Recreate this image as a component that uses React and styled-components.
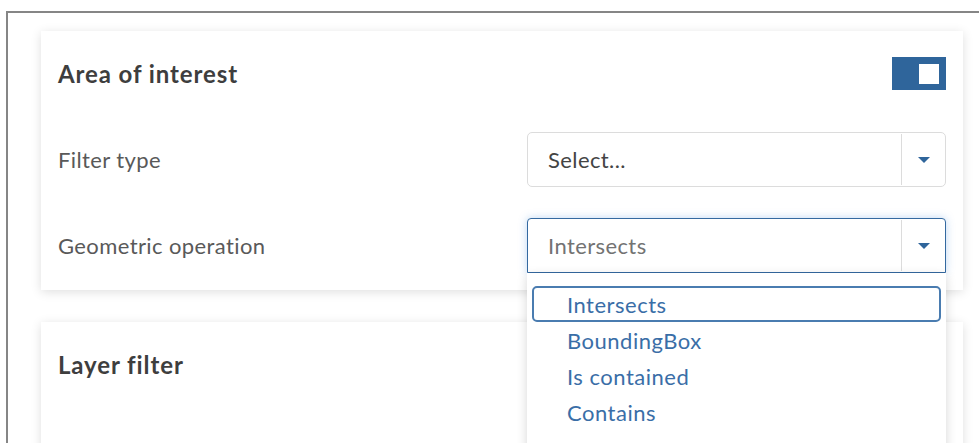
import React from "react";
import styled, { createGlobalStyle } from "styled-components";

const GlobalStyle = createGlobalStyle`
  html, body {
    margin: 0;
    padding: 0;
    background: #ffffff;
    overflow: hidden;
  }
  body {
    font-family: Lato, "Open Sans", "Liberation Sans", sans-serif;
  }
`;

const Frame = styled.div`
  margin: 11px 0 0 6px;
  width: 992px;
  height: 432px;
  border: 2px solid #868686;
  border-right: none;
  border-bottom: none;
  padding: 18px 0 0 33px;
  box-sizing: border-box;
  display: flex;
  flex-direction: column;
  gap: 32px;
  overflow: hidden;
`;

const Card = styled.section`
  width: 922px;
  flex-shrink: 0;
  background: #ffffff;
  box-shadow: 0 2px 10px rgba(0, 0, 0, 0.13);
  padding: 26px 17px 17px 17px;
  box-sizing: border-box;
  display: flex;
  flex-direction: column;
  gap: 31px;
  min-height: ${(p) => (p.$tall ? "160px" : "auto")};
`;

const Header = styled.header`
  display: flex;
  align-items: center;
  justify-content: space-between;
  height: 33px;
  margin-bottom: 11px;
`;

const Title = styled.h2`
  margin: 0;
  font-size: 24px;
  font-weight: 700;
  letter-spacing: 0.9px;
  color: #3e3e3e;
`;

const Toggle = styled.button`
  width: 54px;
  height: 33px;
  border: none;
  padding: 0 7px 0 0;
  background: #2f659b;
  display: flex;
  align-items: center;
  justify-content: flex-end;
  cursor: pointer;
`;

const Knob = styled.span`
  width: 20px;
  height: 20px;
  background: #ffffff;
`;

const Row = styled.div`
  display: flex;
  align-items: center;
  justify-content: space-between;
`;

const Label = styled.label`
  font-size: 22px;
  letter-spacing: 0.4px;
  color: #595959;
`;

const SelectWrap = styled.div`
  position: relative;
  width: 419px;
`;

const SelectBox = styled.div`
  height: 55px;
  box-sizing: border-box;
  display: flex;
  align-items: stretch;
  background: #fff;
  border: 1px solid ${(p) => (p.$focused ? "#3469a0" : "#dcdcdc")};
  border-radius: ${(p) => (p.$focused ? "4px 4px 0 0" : "5px")};
  box-shadow: ${(p) =>
    p.$focused ? "0 0 8px rgba(70, 140, 220, 0.35)" : "none"};
`;

const Value = styled.span`
  flex: 1;
  display: flex;
  align-items: center;
  padding-left: 20px;
  font-size: 22px;
  letter-spacing: 0.4px;
  color: ${(p) => (p.$muted ? "#737373" : "#444444")};
`;

const ArrowZone = styled.span`
  width: 43px;
  border-left: 1px solid #dcdcdc;
  margin: 1px 0;
  display: flex;
  align-items: center;
  justify-content: center;
`;

const Arrow = styled.span`
  width: 0;
  height: 0;
  border-left: 6px solid transparent;
  border-right: 6px solid transparent;
  border-top: 6px solid #2f659b;
  margin-left: 1px;
`;

const Menu = styled.ul`
  position: absolute;
  top: 100%;
  left: 0;
  right: 0;
  margin: 0;
  padding: 13px 5px 30px;
  list-style: none;
  background: #fff;
  box-shadow: 0 3px 10px rgba(0, 0, 0, 0.16);
  z-index: 2;
`;

const Option = styled.li`
  height: 36px;
  box-sizing: border-box;
  display: flex;
  align-items: center;
  padding-left: ${(p) => (p.$active ? "33px" : "35px")};
  font-size: 22px;
  letter-spacing: 0.5px;
  color: #3a6ea7;
  border: ${(p) => (p.$active ? "2px solid #4a7cb0" : "none")};
  border-radius: 5px;
`;

const Select = ({ value, focused, options }) => (
  <SelectWrap>
    <SelectBox $focused={focused}>
      <Value $muted={focused}>{value}</Value>
      <ArrowZone>
        <Arrow />
      </ArrowZone>
    </SelectBox>
    {options && (
      <Menu>
        {options.map((o) => (
          <Option key={o} $active={o === value}>
            {o}
          </Option>
        ))}
      </Menu>
    )}
  </SelectWrap>
);

export default function App() {
  return (
    <>
      <GlobalStyle />
      <Frame>
        <Card>
          <Header>
            <Title>Area of interest</Title>
            <Toggle aria-label="Enabled">
              <Knob />
            </Toggle>
          </Header>
          <Row>
            <Label>Filter type</Label>
            <Select value="Select..." />
          </Row>
          <Row>
            <Label>Geometric operation</Label>
            <Select
              value="Intersects"
              focused
              options={["Intersects", "BoundingBox", "Is contained", "Contains"]}
            />
          </Row>
        </Card>
        <Card $tall>
          <Header>
            <Title>Layer filter</Title>
          </Header>
        </Card>
      </Frame>
    </>
  );
}
